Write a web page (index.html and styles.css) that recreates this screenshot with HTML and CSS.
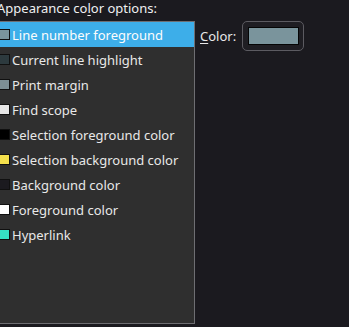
FILE: index.html
```html
<!DOCTYPE html>
<html lang="en">
<head>
    <meta charset="UTF-8">
    <title>Appearance colors</title>
    <link rel="stylesheet" href="styles.css">
</head>
<body>
    <div class="page">
        <div class="left">
            <div class="caption">Appearance co<u>l</u>or options:</div>
            <ul class="list">
                <li class="item selected"><span class="swatch" style="background:#7a949c"></span>Line number foreground</li>
                <li class="item"><span class="swatch" style="background:#2d3a3e"></span>Current line highlight</li>
                <li class="item"><span class="swatch" style="background:#7c8e94"></span>Print margin</li>
                <li class="item"><span class="swatch" style="background:#e6e6e6"></span>Find scope</li>
                <li class="item"><span class="swatch" style="background:#000000"></span>Selection foreground color</li>
                <li class="item"><span class="swatch" style="background:#f4e04c"></span>Selection background color</li>
                <li class="item"><span class="swatch" style="background:#1b1a1f"></span>Background color</li>
                <li class="item"><span class="swatch" style="background:#ffffff"></span>Foreground color</li>
                <li class="item"><span class="swatch" style="background:#36e0c4"></span>Hyperlink</li>
            </ul>
        </div>
        <div class="right">
            <span class="color-label"><u>C</u>olor:</span>
            <button class="color-btn"><span class="color-fill"></span></button>
        </div>
    </div>
</body>
</html>
```

FILE: styles.css
```css
body {
    margin: 0;
    background-color: #1b1a1f;
    color: #eff0f1;
    font-family: "Noto Sans", sans-serif;
    font-size: 13px;
    overflow: hidden;
}
.page {
    display: flex;
    height: 327px;
}
.left {
    margin-left: -4px;
    width: 199px;
    display: flex;
    flex-direction: column;
}
.caption {
    height: 21px;
    line-height: 17px;
    padding-left: 1px;
}
.caption u, .color-label u {
    text-underline-offset: 2px;
}
.list {
    list-style: none;
    margin: 0;
    padding: 0;
    height: 301px;
    border: 1px solid #6e6e72;
    background-color: #2f2f2f;
}
.item {
    height: 25px;
    display: flex;
    align-items: center;
    gap: 2px;
    padding-left: 2px;
    color: #e8e8e8;
}
.item.selected {
    background-color: #3daee9;
    color: #fcfcfc;
}
.swatch {
    width: 9px;
    height: 9px;
    border: 1px solid #101010;
    flex-shrink: 0;
}
.right {
    display: flex;
    align-items: flex-start;
    padding-left: 5px;
    padding-top: 21px;
    gap: 6px;
}
.color-label {
    line-height: 30px;
    color: #e8e8e8;
}
.color-btn {
    width: 62px;
    height: 30px;
    padding: 0;
    margin: 0;
    border: 1px solid #5c5b61;
    border-radius: 5px;
    background-color: #1f1e23;
    display: flex;
    align-items: center;
    justify-content: center;
}
.color-fill {
    width: 49px;
    height: 16px;
    background-color: #7a949c;
    border: 1px solid #050505;
}
```
